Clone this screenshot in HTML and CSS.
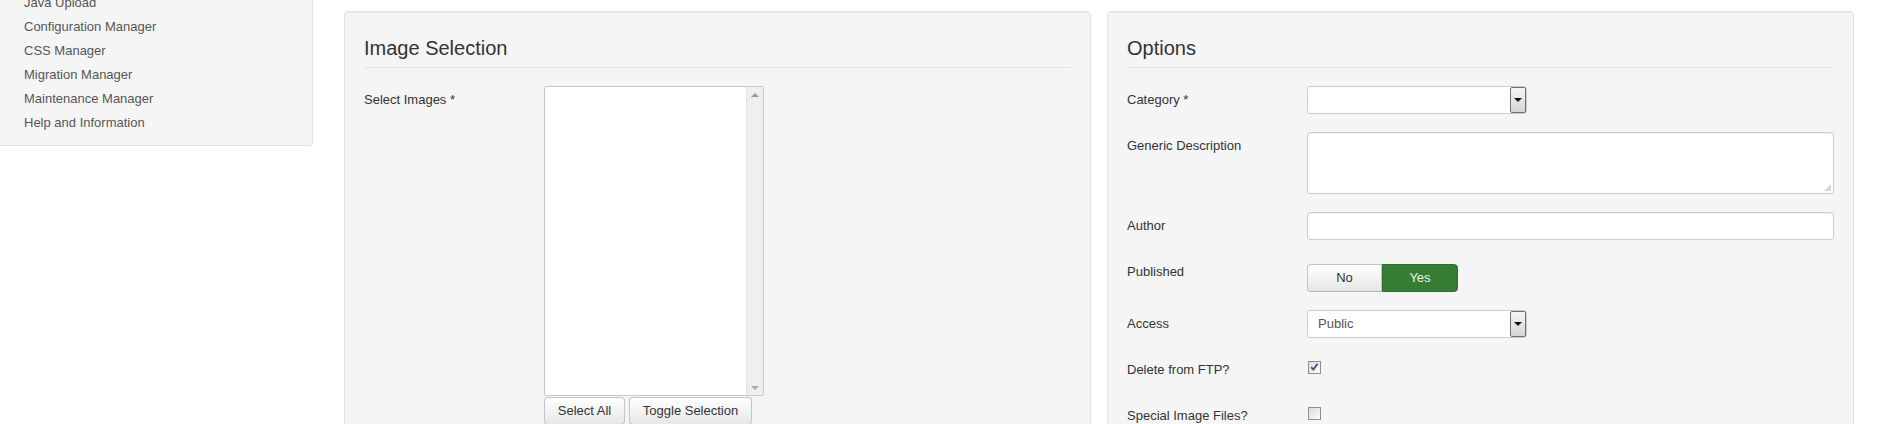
FILE: index.html
```html
<!DOCTYPE html>
<html lang="en">
<head>
<meta charset="utf-8">
<title>Image Upload</title>
<link rel="stylesheet" href="styles.css">
</head>
<body>
<div class="page">
  <aside class="sidebar">
    <ul class="nav-list">
      <li><a href="#">Java Upload</a></li>
      <li><a href="#">Configuration Manager</a></li>
      <li><a href="#">CSS Manager</a></li>
      <li><a href="#">Migration Manager</a></li>
      <li><a href="#">Maintenance Manager</a></li>
      <li><a href="#">Help and Information</a></li>
    </ul>
  </aside>
  <main class="main">
    <section class="well">
      <h2 class="legend">Image Selection</h2>
      <div class="cg">
        <label class="cl">Select Images *</label>
        <div class="controls">
          <div class="listbox">
            <div class="lb-area"></div>
            <div class="lb-scroll">
              <span class="sb-up"></span>
              <span class="sb-down"></span>
            </div>
          </div>
          <div class="btn-row">
            <button class="btn btn-a">Select All</button>
            <button class="btn btn-b">Toggle Selection</button>
          </div>
        </div>
      </div>
    </section>
    <section class="well">
      <h2 class="legend">Options</h2>
      <div class="cg">
        <label class="cl">Category *</label>
        <div class="controls">
          <div class="select"><span class="sel-text"></span><span class="sel-arrow"><span class="tri"></span></span></div>
        </div>
      </div>
      <div class="cg">
        <label class="cl">Generic Description</label>
        <div class="controls">
          <div class="textarea"><span class="grip"></span></div>
        </div>
      </div>
      <div class="cg">
        <label class="cl">Author</label>
        <div class="controls">
          <div class="input"></div>
        </div>
      </div>
      <div class="cg">
        <label class="cl">Published</label>
        <div class="controls controls-radio">
          <div class="btn-group">
            <span class="rb rb-no">No</span>
            <span class="rb rb-yes">Yes</span>
          </div>
        </div>
      </div>
      <div class="cg">
        <label class="cl">Access</label>
        <div class="controls">
          <div class="select"><span class="sel-text">Public</span><span class="sel-arrow"><span class="tri"></span></span></div>
        </div>
      </div>
      <div class="cg cg-check">
        <label class="cl">Delete from FTP?</label>
        <div class="controls controls-check">
          <span class="checkbox">
            <svg width="11" height="11" viewBox="0 0 11 11"><path d="M2.2 5.2 L4.3 7.6 L8.6 1.8" fill="none" stroke="#3b4f8a" stroke-width="1.8"/></svg>
          </span>
        </div>
      </div>
      <div class="cg cg-check">
        <label class="cl">Special Image Files?</label>
        <div class="controls controls-check">
          <span class="checkbox"></span>
        </div>
      </div>
    </section>
  </main>
</div>
</body>
</html>
```
FILE: styles.css
```css
html, body {
  margin: 0;
  padding: 0;
  background: #fff;
  overflow: hidden;
}
body {
  font-family: "Liberation Sans", Arial, Helvetica, sans-serif;
  font-size: 13px;
  line-height: 18px;
  color: #333;
}
.page {
  display: flex;
  align-items: flex-start;
  width: 1880px;
}
.sidebar {
  width: 313px;
  flex: none;
  box-sizing: border-box;
  margin-top: -20px;
  padding: 11px 0 10px;
  background: #f5f5f5;
  border-right: 1px solid #e3e3e3;
  border-bottom: 1px solid #e3e3e3;
  border-bottom-right-radius: 4px;
}
.nav-list {
  list-style: none;
  margin: 0;
  padding: 0;
}
.nav-list li a {
  display: block;
  height: 24px;
  line-height: 24px;
  padding-left: 24px;
  color: #555;
  text-decoration: none;
}
.main {
  flex: 1;
  margin-left: 31px;
  padding: 11px 26px 0 0;
  display: grid;
  grid-template-columns: 1fr 1fr;
  column-gap: 16px;
}
.well {
  min-height: 520px;
  background: #f5f5f5;
  border: 1px solid #e3e3e3;
  border-radius: 4px;
  box-shadow: inset 0 1px 1px rgba(0,0,0,0.05);
  padding: 19px 19px 19px;
}
.legend {
  margin: 0 0 18px;
  padding-bottom: 2px;
  font-size: 20px;
  font-weight: normal;
  line-height: 34px;
  color: #333;
  border-bottom: 1px solid #e5e5e5;
}
.cg {
  display: grid;
  grid-template-columns: 180px 1fr;
  margin-bottom: 18px;
}
.cl {
  padding-top: 5px;
  line-height: 18px;
  color: #333;
}
.controls-radio {
  padding-top: 6px;
}
.cg-check {
  min-height: 28px;
}
.controls-check {
  padding-top: 5px;
}
.listbox {
  width: 220px;
  height: 310px;
  box-sizing: border-box;
  border: 1px solid #c8c8c8;
  border-radius: 2px;
  background: #fff;
  display: flex;
}
.lb-area {
  flex: 1;
}
.lb-scroll {
  width: 16px;
  background: #efefef;
  border-left: 1px solid #e2e2e2;
  display: flex;
  flex-direction: column;
  justify-content: space-between;
  align-items: center;
  padding: 6px 0 5px;
}
.sb-up, .sb-down {
  width: 0;
  height: 0;
  border-left: 4px solid transparent;
  border-right: 4px solid transparent;
}
.sb-up {
  border-bottom: 4px solid #9a9a9a;
}
.sb-down {
  border-top: 4px solid #a8a8a8;
}
.btn-row {
  display: flex;
  gap: 4px;
  margin-top: 1px;
}
.btn {
  box-sizing: border-box;
  height: 28px;
  padding: 4px 12px;
  font-family: "Liberation Sans", Arial, sans-serif;
  font-size: 13px;
  line-height: 18px;
  color: #333;
  background: linear-gradient(#ffffff, #e6e6e6);
  border: 1px solid #c5c5c5;
  border-bottom-color: #b3b3b3;
  border-radius: 4px;
  box-shadow: inset 0 1px 0 rgba(255,255,255,0.2), 0 1px 2px rgba(0,0,0,0.05);
}
.btn-a { width: 81px; }
.btn-b { width: 123px; }
.select {
  width: 220px;
  height: 28px;
  box-sizing: border-box;
  border: 1px solid #ccc;
  border-radius: 3px;
  background: #fff;
  display: flex;
  align-items: stretch;
}
.sel-text {
  flex: 1;
  padding-left: 10px;
  line-height: 26px;
  color: #555;
}
.sel-arrow {
  width: 16px;
  box-sizing: border-box;
  border: 1px solid #6f6f6f;
  border-radius: 2px;
  background: linear-gradient(#f4f4f4, #d6d6d6);
  display: flex;
  align-items: center;
  justify-content: center;
}
.tri {
  width: 0;
  height: 0;
  border-left: 4px solid transparent;
  border-right: 4px solid transparent;
  border-top: 4px solid #111;
}
.textarea {
  width: 527px;
  height: 62px;
  box-sizing: border-box;
  border: 1px solid #ccc;
  border-radius: 3px;
  background: #fff;
  box-shadow: inset 0 1px 1px rgba(0,0,0,0.075);
  display: flex;
  justify-content: flex-end;
  align-items: flex-end;
}
.grip {
  width: 7px;
  height: 7px;
  margin: 0 2px 2px 0;
  background: radial-gradient(circle, #aaa 0.6px, transparent 0.8px) 0 0 / 2px 2px;
  clip-path: polygon(100% 0, 100% 100%, 0 100%);
}
.input {
  width: 527px;
  height: 28px;
  box-sizing: border-box;
  border: 1px solid #ccc;
  border-radius: 3px;
  background: #fff;
  box-shadow: inset 0 1px 1px rgba(0,0,0,0.075);
}
.btn-group {
  display: flex;
}
.rb {
  box-sizing: border-box;
  height: 28px;
  line-height: 26px;
  text-align: center;
  font-size: 13px;
}
.rb-no {
  width: 75px;
  color: #333;
  background: linear-gradient(#ffffff, #e6e6e6);
  border: 1px solid #c5c5c5;
  border-bottom-color: #b3b3b3;
  border-radius: 4px 0 0 4px;
}
.rb-yes {
  width: 76px;
  color: #e8f2e8;
  background: #367e35;
  border: 1px solid #2d6c2c;
  border-radius: 0 4px 4px 0;
}
.checkbox {
  display: flex;
  align-items: center;
  justify-content: center;
  width: 13px;
  height: 13px;
  box-sizing: border-box;
  border: 1px solid #8f8f8f;
  background: linear-gradient(135deg, #dcdcdc, #fbfbfb);
  margin-left: 1px;
}
.checkbox svg {
  display: block;
}
```
